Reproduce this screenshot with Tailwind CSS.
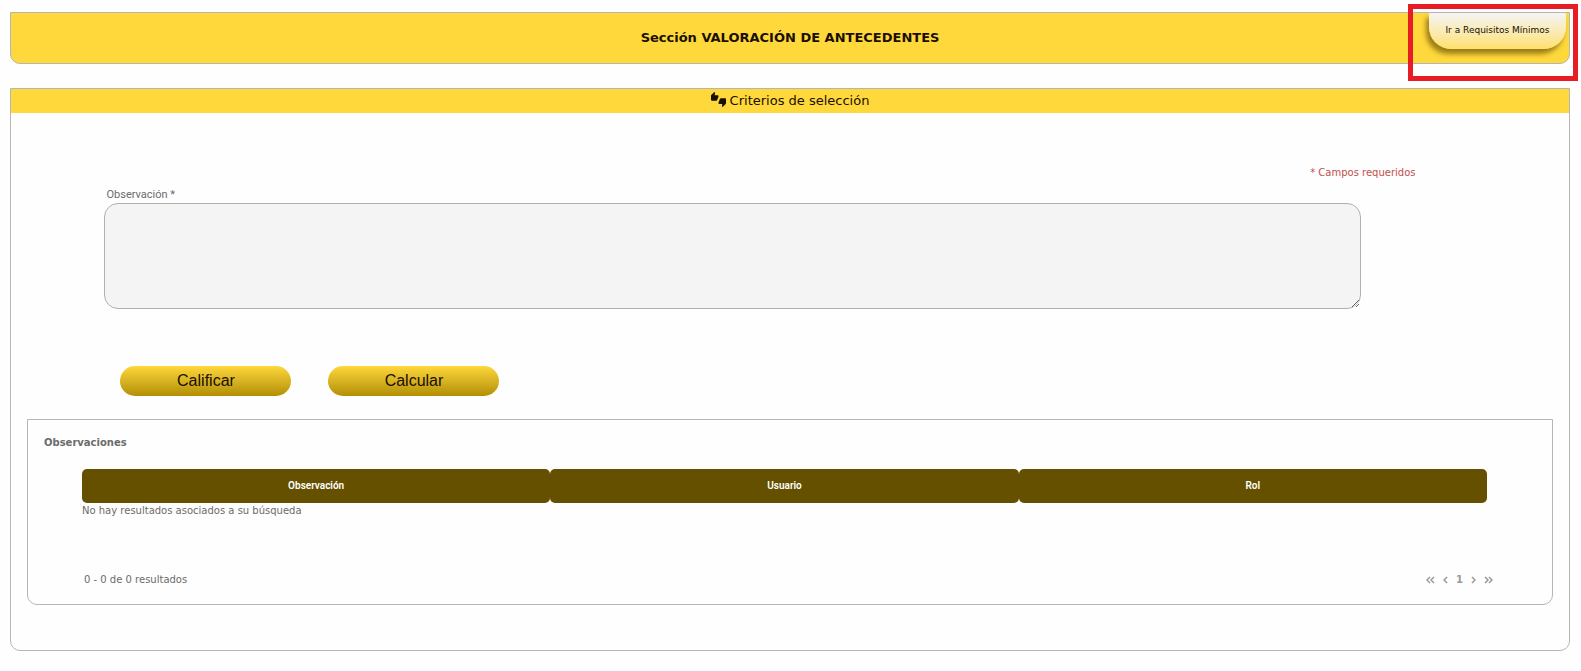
<!DOCTYPE html>
<html lang="es">

<head>
    <meta charset="UTF-8">
    <meta name="viewport" content="width=device-width, initial-scale=1.0">
    <title>Valoración de Antecedentes</title>
    <script src="https://cdn.jsdelivr.net/npm/@tailwindcss/browser@4"></script>
</head>

<body class="bg-[#fefefe] pt-3 pr-[11px] pb-5 pl-[10px] font-['DejaVu_Sans',sans-serif] text-[10px] leading-4 text-[#6b6b6b]">
    <header class="relative flex h-[52px] items-center justify-center rounded-b-[10px] border border-[#b5b5b5] bg-[#ffd83b]">
        <h1 class="text-[13px] font-bold text-[#1a0f00]">Sección VALORACIÓN DE ANTECEDENTES</h1>
        <button type="button"
            class="absolute top-0 right-[3px] h-9 w-[137px] rounded-b-[22px] bg-linear-to-b from-[#f4f4f4] to-[#ffe06a] pb-[2px] text-[9px] text-[#1a0f00] shadow-[-3px_5px_5px_rgba(90,65,0,0.6)]">Ir a Requisitos Mínimos</button>
        <!-- Recuadro de resaltado -->
        <div class="pointer-events-none absolute -top-[9px] -right-[9px] h-[77px] w-[170px] border-5 border-[#e81c24]"></div>
    </header>

    <main class="mt-6 rounded-b-[10px] border border-[#b5b5b5] pb-[45px]">
        <h2 class="flex h-6 items-center justify-center gap-1 bg-[#ffd83b] text-[13px] text-[#1a0f00]">
            <svg class="-mt-1 h-[15px] w-[15px]" viewBox="0 0 24 24" fill="currentColor" aria-hidden="true">
                <path d="M12 6c0-.55-.45-1-1-1H5.820l.66-3.180.02-.230c0-.310-.130-.590-.330-.8L5.380 0 .44 4.940C.170 5.210 0 5.590 0 6v6.500c0 .830.670 1.500 1.500 1.500h6.750c.620 0 1.150-.380 1.380-.910l2.260-5.290c.070-.170.110-.360.110-.550V6zm10.500 4h-6.750c-.620 0-1.150.380-1.380.910l-2.260 5.290c-.070.170-.110.360-.110.550V18c0 .550.450 1 1 1h5.180l-.660 3.180-.020.240c0 .310.130.590.330.8l.790.780 4.940-4.940c.270-.270.440-.650.440-1.060v-6.500c0-.830-.670-1.500-1.500-1.500z" />
            </svg>
            Criterios de selección
        </h2>

        <form class="px-[6%] pt-[52px]">
            <p class="pr-[60px] text-right text-[#c0504a]">* Campos requeridos</p>
            <label for="observacion" class="mt-[6px] block pl-[2px] font-[Roboto,sans-serif] text-[11px]">Observación *</label>
            <div class="pr-[115px]">
                <textarea id="observacion"
                    class="block h-[106px] w-full resize rounded-[14px] border border-[#b0b0b0] bg-[#f4f4f4] p-2"></textarea>
            </div>
            <div class="mt-[57px] flex gap-[37px] pl-4">
                <button type="button"
                    class="h-[30px] w-[171px] rounded-full bg-linear-to-b from-[#ffd83b] to-[#b38f00] font-['Liberation_Sans',sans-serif] text-base text-[#1a0f00]">Calificar</button>
                <button type="button"
                    class="h-[30px] w-[171px] rounded-full bg-linear-to-b from-[#ffd83b] to-[#b38f00] font-['Liberation_Sans',sans-serif] text-base text-[#1a0f00]">Calcular</button>
            </div>
        </form>

        <section class="mx-4 mt-[23px] rounded-b-[10px] border border-[#b5b5b5] px-4 pt-[15px] pb-4">
            <h3 class="font-bold">Observaciones</h3>
            <div class="mt-[18px] pr-[49px] pl-[38px]">
                <table class="w-full table-fixed">
                    <thead>
                        <tr class="h-[34px] font-[Roboto,sans-serif] text-white">
                            <th class="rounded-[5px] bg-[#655000] font-semibold">Observación</th>
                            <th class="rounded-[5px] bg-[#655000] font-semibold">Usuario</th>
                            <th class="rounded-[5px] bg-[#655000] font-semibold">Rol</th>
                        </tr>
                    </thead>
                    <tbody>
                        <tr>
                            <td colspan="3">No hay resultados asociados a su búsqueda</td>
                        </tr>
                    </tbody>
                </table>
            </div>
            <div class="mt-[53px] flex items-center justify-between pr-[43px] pl-[40px]">
                <p>0 - 0 de 0 resultados</p>
                <nav class="flex items-center gap-2 font-bold text-[#9a9a9a]" aria-label="Paginación">
                    <button type="button" aria-label="Primera">
                        <svg class="h-2 w-[9px]" viewBox="0 0 9 8" fill="none" stroke="currentColor" stroke-width="1.500"><path d="M4 1L1 4l3 3M8 1L5 4l3 3" /></svg>
                    </button>
                    <button type="button" aria-label="Anterior">
                        <svg class="h-2 w-[5px]" viewBox="0 0 5 8" fill="none" stroke="currentColor" stroke-width="1.500"><path d="M4 1L1 4l3 3" /></svg>
                    </button>
                    <button type="button">1</button>
                    <button type="button" aria-label="Siguiente">
                        <svg class="h-2 w-[5px]" viewBox="0 0 5 8" fill="none" stroke="currentColor" stroke-width="1.500"><path d="M1 1l3 3-3 3" /></svg>
                    </button>
                    <button type="button" aria-label="Última">
                        <svg class="h-2 w-[9px]" viewBox="0 0 9 8" fill="none" stroke="currentColor" stroke-width="1.500"><path d="M1 1l3 3-3 3M5 1l3 3-3 3" /></svg>
                    </button>
                </nav>
            </div>
        </section>
    </main>
</body>

</html>
